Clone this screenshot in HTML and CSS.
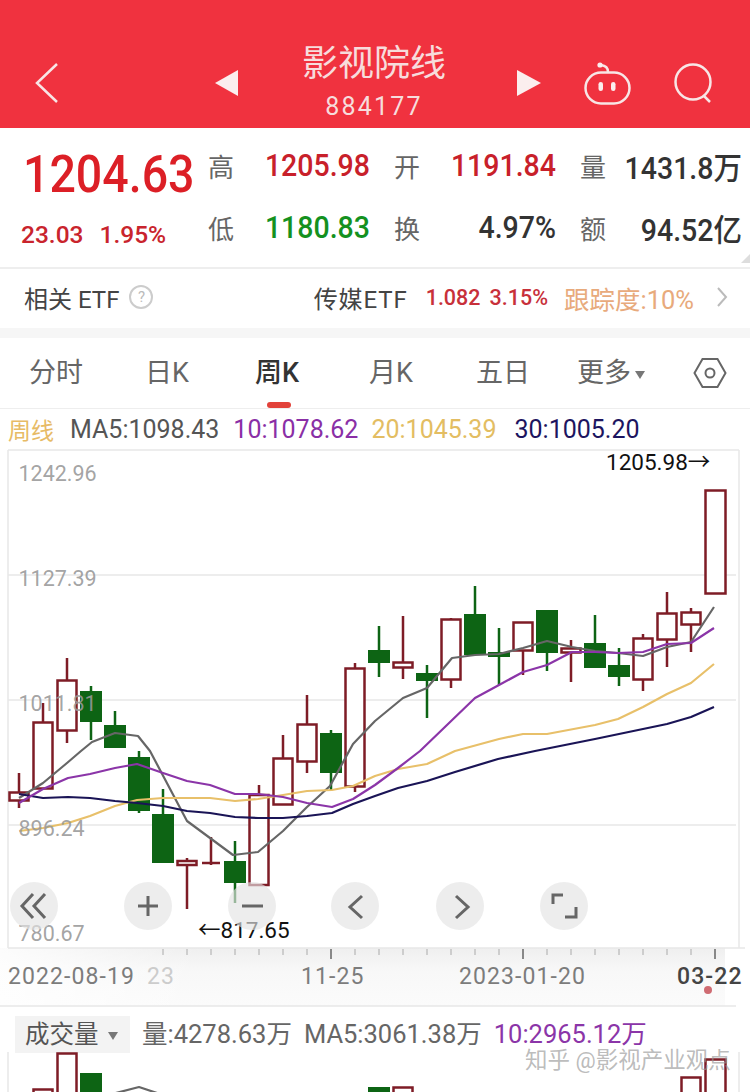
FILE: index.html
```html
<!DOCTYPE html>
<html lang="zh">
<head>
<meta charset="utf-8">
<title>影视院线</title>
<link rel="stylesheet" href="styles.css">
</head>
<body>
<main class="page">
  <header class="topbar">
    <svg class="back" width="24" height="42" viewBox="0 0 24 42"><path d="M22 2 2 21l20 19" /></svg>
    <svg class="tri" width="24" height="26" viewBox="0 0 24 26"><path class="solid" d="M23 0v26L0 13z"/></svg>
    <div class="title">
      <div class="title-name">影视院线</div>
      <div class="title-code">884177</div>
    </div>
    <svg class="tri" width="24" height="26" viewBox="0 0 24 26"><path class="solid" d="M0 0v26l24-13z"/></svg>
    <svg class="robot" width="48" height="44" viewBox="0 0 48 44"><rect x="2.500" y="10.500" width="44" height="31" rx="15.500"/><path d="M25 10C25 6 22 3.500 18 3"/><circle class="solid" cx="17" cy="3" r="2.600"/><rect class="solid" x="15.500" y="20" width="4.500" height="9" rx="2.250"/><rect class="solid" x="28" y="20" width="4.500" height="9" rx="2.250"/></svg>
    <svg class="search" width="42" height="42" viewBox="0 0 42 42"><circle cx="19" cy="19" r="17.500"/><path d="m30 33 6 6"/></svg>
  </header>

  <section class="quote">
    <div class="price">
      <div class="price-main">1204.63</div>
      <div class="price-change"><span>23.03</span><span>1.95%</span></div>
    </div>
    <div class="stats">
      <div class="stat"><span class="stat-label">高</span><span class="stat-value red">1205.98</span></div>
      <div class="stat"><span class="stat-label">开</span><span class="stat-value red">1191.84</span></div>
      <div class="stat"><span class="stat-label">量</span><span class="stat-value">1431.8万</span></div>
      <div class="stat"><span class="stat-label">低</span><span class="stat-value green">1180.83</span></div>
      <div class="stat"><span class="stat-label">换</span><span class="stat-value">4.97%</span></div>
      <div class="stat"><span class="stat-label">额</span><span class="stat-value">94.52亿</span></div>
    </div>
    <span class="corner"></span>
  </section>

  <section class="etf">
    <span class="etf-name">相关 ETF</span>
    <span class="help">?</span>
    <span class="etf-spacer"></span>
    <span class="etf-name etf-media">传媒ETF</span>
    <span class="etf-num">1.082</span>
    <span class="etf-num">3.15%</span>
    <span class="etf-track">跟踪度:10%</span>
    <svg class="etf-arrow" width="12" height="20" viewBox="0 0 12 20"><path d="m2 1 8 9-8 9"/></svg>
  </section>

  <nav class="tabs">
    <span class="tab tab-a">分时</span>
    <span class="tab tab-b">日K</span>
    <span class="tab tab-c active">周K</span>
    <span class="tab tab-d">月K</span>
    <span class="tab tab-e">五日</span>
    <span class="tab tab-f">更多<i class="caret"></i></span>
    <svg class="hex" width="34" height="32" viewBox="0 0 34 32"><path d="M9.500 2h15L32.500 16l-8 14h-15L1.500 16z"/><circle cx="17" cy="16" r="4.500"/></svg>
  </nav>

  <div class="legend">
    <span class="lg-period">周线</span>
    <span class="lg-ma5">MA5:1098.43</span>
    <span class="lg-ma10">10:1078.62</span>
    <span class="lg-ma20">20:1045.39</span>
    <span class="lg-ma30">30:1005.20</span>
  </div>

  <svg class="chart" width="750" height="558" viewBox="0 448 750 558">
    <defs>
      <linearGradient id="axisfade" x1="0" y1="0" x2="0" y2="1"><stop offset="0" stop-color="#efefef"/><stop offset=".4" stop-color="#f8f8f8"/><stop offset="1" stop-color="#fbfbfb"/></linearGradient>
      <linearGradient id="axisleft" x1="0" y1="0" x2="1" y2="0"><stop offset="0" stop-color="#fff" stop-opacity=".8"/><stop offset="1" stop-color="#fff" stop-opacity="0"/></linearGradient>
    </defs>
    <rect x="0" y="947" width="725" height="58" fill="url(#axisfade)"/>
    <rect x="0" y="947" width="200" height="58" fill="url(#axisleft)"/>
    <g class="grid">
      <path d="M8 449H739M8 449V947M739 449V947M8 574H736M8 699H736M8 824H736M8 947H745M0 1005H736"/>
      <path class="ticks" d="M163 948v6M187 948v6M211 948v6M235 948v6M259 948v6M283 948v6M307 948v6M355 948v6M379 948v6M403 948v6M427 948v6M451 948v6M475 948v6M499 948v6M547 948v6M571 948v6M595 948v6M619 948v6M643 948v6M667 948v6M691 948v6"/>
      <path class="ticks major" d="M331 948v10M523 948v10M715 948v10"/>
    </g>

    <g class="candles">
      <g class="up">
        <path d="M19 772V807M43 702V721M67 657V742M187 857V908M211 836V864M259 784V794M283 734V757M307 694V772M355 662V791M403 615V678M451 617V687M523 649V674M571 639V681M643 633V690M667 591V666M691 607V651"/>
        <rect x="9.500" y="791.500" width="19" height="8"/>
        <rect x="33.500" y="721.500" width="19" height="66"/>
        <rect x="57.500" y="679.500" width="19" height="50"/>
        <rect x="177.500" y="860" width="19" height="4"/>
        <path d="M202 862H220"/>
        <rect x="249.500" y="794" width="19" height="90"/>
        <rect x="273.500" y="757.500" width="19" height="46"/>
        <rect x="297.500" y="723.500" width="19" height="37"/>
        <rect x="345.500" y="667.500" width="19" height="118"/>
        <rect x="393.500" y="661.500" width="19" height="5"/>
        <rect x="441.500" y="618.500" width="19" height="60"/>
        <rect x="513.500" y="621.500" width="19" height="28"/>
        <rect x="561.500" y="647.500" width="19" height="4"/>
        <rect x="633.500" y="637.500" width="19" height="41"/>
        <rect x="657.500" y="612.500" width="19" height="26"/>
        <rect x="681.500" y="611.500" width="19" height="12"/>
        <rect x="705.500" y="489.500" width="20" height="103"/>
      </g>
      <g class="down">
        <path d="M91 685V739M115 710V747M139 750V812M163 788V813M235 840V902M331 729V789M379 625V676M427 664V717M475 585V654M499 627V684M547 652V670M595 614V667M619 647V685"/>
        <rect x="80" y="690" width="22" height="31"/>
        <rect x="104" y="724" width="22" height="23"/>
        <rect x="128" y="756" width="22" height="54"/>
        <rect x="152" y="813" width="22" height="49"/>
        <rect x="224" y="860" width="22" height="22"/>
        <rect x="320" y="732" width="22" height="40"/>
        <rect x="368" y="649" width="22" height="13"/>
        <rect x="416" y="672" width="22" height="8"/>
        <rect x="464" y="613" width="22" height="41"/>
        <rect x="488" y="651" width="22" height="5"/>
        <rect x="536" y="609" width="22" height="43"/>
        <rect x="584" y="642" width="22" height="25"/>
        <rect x="608" y="664" width="22" height="12"/>
      </g>
    </g>

    <g class="lines">
      <polyline class="l5" points="19,797 43,782 67,762 81,750 92,741 115,732 138,735 150,750 187,820 233,854 258,851 283,830 307,806 330,785 353,743 375,720 403,697 427,687 452,657 475,654 499,653 523,647 547,640 572,646 595,650 618,652 643,655 667,646 691,641 714,606"/>
      <polyline class="l20" points="19,830 43,827 68,822 90,815 115,805 137,799 163,797 187,797 210,797 235,800 258,798 283,794 307,790 332,789 353,785 375,775 398,768 427,763 455,750 499,738 523,733 547,733 595,724 618,718 643,706 667,693 691,682 714,663"/>
      <polyline class="l30" points="19,793 43,797 68,796 90,797 115,800 137,802 163,805 187,810 210,812 235,816 258,817 283,817 307,815 332,812 353,803 375,795 398,787 427,780 455,771 498,758 535,750 595,738 643,728 667,723 691,716 714,706"/>
      <polyline class="l10" points="19,802 43,788 68,777 90,773 115,767 137,763 163,772 187,780 210,784 235,793 258,793 283,796 307,802 332,806 353,798 375,784 398,767 420,750 475,697 499,684 523,671 547,664 572,651 595,651 618,652 643,651 667,643 691,642 714,627"/>
    </g>

    <text class="axis" x="18.500" y="480">1242.96</text>
    <text class="axis" x="18.500" y="585">1127.39</text>
    <text class="axis" x="18.500" y="710">1011.81</text>
    <text class="axis" x="18.500" y="835">896.24</text>
    <text class="axis" x="18.500" y="940">780.67</text>

    <text class="mark" x="606" y="469">1205.98→</text>
    <text class="mark" x="198" y="937">←817.65</text>

    <g class="pad">
      <circle cx="34" cy="905" r="24"/>
      <circle cx="148" cy="905" r="24"/>
      <circle cx="252" cy="905" r="24"/>
      <circle cx="355" cy="905" r="24"/>
      <circle cx="460" cy="905" r="24"/>
      <circle cx="564" cy="905" r="24"/>
    </g>
    <g class="pad-icons">
      <path d="M33 893 22 905l11 12M45 893 34 905l11 12"/>
      <path d="M138 905H158M148 895V915"/>
      <path d="M242 905H263"/>
      <path d="M362 895 350 906l12 11"/>
      <path d="M456 895 468 906l-12 11"/>
      <path d="M553 903V894H563M576 906V916H565"/>
    </g>

    <g class="dates">
      <text x="8" y="983">2022-08-19</text>
      <text class="faded" x="147" y="983">23</text>
      <text x="301" y="983">11-25</text>
      <text x="459" y="983">2023-01-20</text>
      <text class="today" x="677" y="983">03-22</text>
    </g>
    <circle class="dot" cx="708" cy="989" r="4"/>
  </svg>

  <section class="volume">
    <div class="vol-head">
      <span class="vol-chip">成交量<i class="caret"></i></span>
      <span class="vol-gray">量:4278.63万</span>
      <span class="vol-gray">MA5:3061.38万</span>
      <span class="vol-purple">10:2965.12万</span>
    </div>
    <svg class="vol-chart" width="750" height="40" viewBox="0 1050 750 40">
      <path class="vol-frame" d="M8 1050V1090M739 1050V1090"/>
      <g class="candles">
        <g class="up">
          <rect x="33.500" y="1087.500" width="19" height="10"/>
          <rect x="57.500" y="1051.500" width="19" height="46"/>
          <rect x="393.500" y="1085.500" width="19" height="10"/>
          <rect x="681.500" y="1075.500" width="19" height="24"/>
          <rect x="705.500" y="1057.500" width="20" height="40"/>
        </g>
        <g class="down">
          <rect x="80" y="1071" width="22" height="24"/>
          <rect x="368" y="1085" width="22" height="10"/>
        </g>
      </g>
      <polyline class="l5" points="112,1092 139,1085 160,1092"/>
    </svg>
    <span class="watermark">知乎 @影视产业观点</span>
  </section>
</main>
</body>
</html>
```

FILE: styles.css
```css
html, body {
  margin: 0;
  padding: 0;
  background: #fff;
}

.page {
  position: relative;
  width: 750px;
  height: 1092px;
  overflow: hidden;
  font-family: Roboto, "Noto Sans CJK SC", sans-serif;
  color: #333;
}

svg {
  display: block;
  flex: none;
}

/* Header */
.topbar {
  height: 128px;
  box-sizing: border-box;
  padding-left: 35px;
  background: #f0323f;
  display: flex;
  align-items: flex-start;
}

.topbar svg {
  fill: none;
  stroke: #f8e6e6;
  stroke-width: 2.500;
}

.topbar .solid {
  fill: #fbeeee;
  stroke: none;
}

.back {
  margin-top: 62px;
}

.tri {
  margin-top: 70px;
}

.topbar .tri:nth-of-type(2) {
  margin-left: 156px;
}

.title {
  flex: none;
  width: 270px;
  margin-right: 8px;
  text-align: center;
  color: #f7dcdc;
}

.title-name {
  margin-top: 41px;
  font-size: 36px;
  line-height: 46px;
}

.title-code {
  margin-top: 3px;
  font-size: 25px;
  line-height: 34px;
  letter-spacing: 2.200px;
}

.robot {
  margin: 62px 0 0 42px;
}

.search {
  margin: 63px 0 0 43px;
}

/* Quote */
.quote {
  position: relative;
  height: 141px;
  box-sizing: border-box;
  border-bottom: 2px solid #eee;
  display: flex;
}

.price {
  width: 208px;
  box-sizing: border-box;
  padding-left: 23px;
  color: #dc1f26;
}

.price-main {
  margin-top: 19px;
  font-size: 46.500px;
  line-height: 54px;
  font-weight: 500;
  transform: scaleY(1.100);
  transform-origin: left center;
}

.price-change {
  margin: 19px 0 0 -2px;
  display: flex;
  gap: 16px;
  font-size: 24.500px;
  line-height: 30px;
  font-weight: 500;
  color: #c9242d;
}

.stats {
  width: 534px;
  padding-top: 19px;
  display: grid;
  grid-template-columns: repeat(3, 162px);
  column-gap: 24px;
  row-gap: 26px;
  grid-auto-rows: 36px;
}

.stat {
  display: flex;
  justify-content: space-between;
  align-items: center;
}

.stat-label {
  font-size: 26px;
  color: #666;
}

.stat-value {
  font-size: 28.500px;
  font-weight: 500;
  color: #333;
  transform: scaleY(1.080);
}

.red {
  color: #c8202a;
}

.green {
  color: #14911f;
}

.corner {
  position: absolute;
  right: 0;
  bottom: 4px;
  border-style: solid;
  border-width: 0 0 9px 9px;
  border-color: transparent transparent #ddd transparent;
}

/* ETF row */
.etf {
  height: 69px;
  box-sizing: border-box;
  padding: 0 24px 3px;
  border-bottom: 10px solid #f6f6f6;
  display: flex;
  align-items: center;
  font-size: 24px;
}

.etf-name {
  color: #444;
}

.etf-media {
  letter-spacing: .900px;
}

.help {
  width: 20px;
  height: 20px;
  margin-left: 10px;
  border: 2px solid #ccc;
  border-radius: 50%;
  font-size: 15px;
  line-height: 20px;
  text-align: center;
  color: #bbb;
}

.etf-spacer {
  flex: 1;
}

.etf-num {
  margin-left: 18px;
  font-size: 21.500px;
  font-weight: 500;
  color: #c8303a;
}

.etf-num + .etf-num {
  margin-left: 9px;
}

.etf-track {
  margin-left: 16px;
  font-size: 25.500px;
  color: #e8aa7c;
}

.etf-arrow {
  margin: 0 -2px 0 22px;
  fill: none;
  stroke: #bbb;
  stroke-width: 2;
}

/* Tabs */
.tabs {
  position: relative;
  height: 71px;
  box-sizing: border-box;
  border-bottom: 1px solid #eee;
  display: flex;
  align-items: flex-start;
  font-size: 27px;
  line-height: 70px;
  color: #666;
}

.tab {
  flex: none;
  height: 70px;
}

.tab-a { margin-left: 29px; }
.tab-b { margin-left: 62px; }
.tab-c { margin-left: 66px; }
.tab-d { margin-left: 70px; }
.tab-e { margin-left: 63px; }
.tab-f { margin-left: 47px; }

.active {
  position: relative;
  font-weight: 500;
  color: #333;
}

.active::after {
  content: "";
  position: absolute;
  left: 12px;
  bottom: 0;
  width: 24px;
  height: 6px;
  border-radius: 3px;
  background: #e2423a;
}

.caret {
  display: inline-block;
  margin-left: 4px;
  vertical-align: 3px;
  border-style: solid;
  border-width: 8px 5.500px 0;
  border-color: #777 transparent transparent;
}

.hex {
  margin: 19px 0 0 48px;
  fill: none;
  stroke: #666;
  stroke-width: 2;
}

/* Legend */
.legend {
  height: 40px;
  padding-left: 8px;
  display: flex;
  align-items: center;
  font-size: 25px;
  white-space: nowrap;
}

.lg-period { font-size: 23px; color: #e7bb66; }
.lg-ma5 { margin-left: 16px; color: #555; }
.lg-ma10 { margin-left: 14px; color: #8a2fa6; }
.lg-ma20 { margin-left: 13px; color: #e3bd62; }
.lg-ma30 { margin-left: 18px; color: #1d1560; }

/* Chart */
.chart {
  font-family: Roboto, "Noto Sans CJK SC", sans-serif;
}

.grid path {
  fill: none;
  stroke: #e8e8e8;
  stroke-width: 1.500;
}

.grid .ticks {
  stroke: #aaa;
  stroke-width: 1;
}

.grid .major {
  stroke: #888;
  stroke-width: 2;
}

.axis {
  font-size: 21.500px;
  fill: #999;
  fill-opacity: .9;
}

.up path,
.up rect {
  fill: #fff;
  stroke: #7e1c26;
  stroke-width: 2.500;
}

.down path {
  fill: none;
  stroke: #0d6414;
  stroke-width: 2.500;
}

.down rect {
  fill: #0d6414;
}

.lines polyline,
.volume polyline {
  fill: none;
  stroke-width: 2.200;
  stroke-linejoin: round;
}

.l5 { stroke: #666; }
.l10 { stroke: #8b35a8; }
.l20 { stroke: #e8c06a; }
.l30 { stroke: #1a1456; }

.mark {
  font-size: 22.500px;
  fill: #111;
}

.pad circle {
  fill: #e4e4e4;
  fill-opacity: .65;
}

.pad-icons path {
  fill: none;
  stroke: #666;
  stroke-width: 3;
}

.dates text {
  font-size: 23px;
  letter-spacing: 1.100px;
  fill: #7c7c7c;
}

.dates .faded {
  fill: #ccc;
}

.dates .today {
  fill: #444;
  font-weight: 500;
}

.dot {
  fill: #cf6b72;
}

/* Volume */
.volume {
  position: relative;
  padding-top: 2px;
}

.vol-head {
  height: 43px;
  box-sizing: border-box;
  padding: 7px 0 0 15px;
  display: flex;
  align-items: flex-start;
  gap: 12px;
  font-size: 25.500px;
  line-height: 37px;
  white-space: nowrap;
}

.vol-chip {
  width: 115px;
  height: 37px;
  box-sizing: border-box;
  padding-left: 10px;
  font-size: 24.500px;
  background: #f3f3f3;
  color: #555;
}

.vol-chip .caret {
  margin-left: 9px;
}

.vol-gray {
  color: #666;
}

.vol-purple {
  color: #8b35a8;
}

.vol-frame {
  fill: none;
  stroke: #e8e8e8;
  stroke-width: 1.500;
}

.watermark {
  position: absolute;
  left: 525px;
  top: 41px;
  font-size: 22.500px;
  line-height: 24px;
  color: rgba(150, 150, 150, .65);
  white-space: nowrap;
}
```
